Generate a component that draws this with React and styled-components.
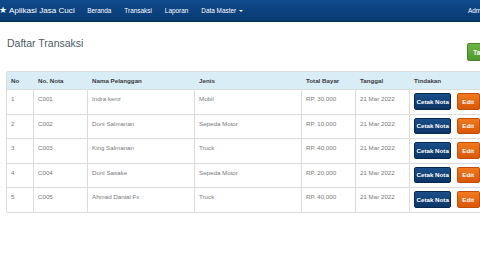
import styled, { createGlobalStyle } from "styled-components"

const GlobalStyle = createGlobalStyle`
  html, body {
    margin: 0;
    padding: 0;
    background: #fff;
    width: 480px;
    height: 270px;
    overflow: hidden;
  }
  body {
    font-family: "Liberation Sans", Arial, sans-serif;
  }
`

const Page = styled.div`
  width: 520px;
`

const NavBar = styled.div`
  height: 21px;
  width: 500px;
  display: flex;
  align-items: center;
  background: linear-gradient(#0e4a8c, #0a3b72);
  border-bottom: 1px solid #062c57;
  color: #fff;
`

const Brand = styled.div`
  display: flex;
  align-items: center;
  gap: 2px;
  font-size: 8.1px;
  font-weight: 500;
  margin-right: 6px;
`

const Star = styled.span`
  font-size: 9px;
  line-height: 1;
  margin-left: -1px;
`

const NavLink = styled.div`
  font-size: 6.4px;
  padding: 0 6.5px;
  display: flex;
  align-items: center;
  gap: 3px;
  margin-left: ${p => (p.$right ? "auto" : "0")};
  padding-right: ${p => (p.$right ? "7px" : "6.5px")};
`

const Caret = styled.span`
  width: 0;
  height: 0;
  border-left: 2.5px solid transparent;
  border-right: 2.5px solid transparent;
  border-top: 2.5px solid #fff;
`

const Content = styled.div`
  padding: 14px 0 0 6px;
`

const TitleRow = styled.div`
  width: 497px;
  display: flex;
  justify-content: space-between;
  align-items: flex-start;
  height: 25px;
  margin-bottom: 10px;
`

const Title = styled.h1`
  margin: 0 0 0 1px;
  font-size: 10.5px;
  line-height: 14px;
  font-weight: normal;
  color: #4d5b69;
`

const AddButton = styled.button`
  margin-top: 7px;
  height: 18px;
  padding: 0 5px;
  font-family: inherit;
  font-size: 6.3px;
  font-weight: bold;
  color: #fff;
  background: linear-gradient(#6bb444, #519a2c);
  border: 1px solid #46862a;
  border-radius: 2px;
`

const Table = styled.table`
  width: 480px;
  table-layout: fixed;
  border-collapse: separate;
  border-spacing: 0;
  border: 1px solid #dcdcdc;
  border-radius: 2px;
  font-size: 6.2px;
`

const Th = styled.th`
  background: #d9edf7;
  color: #3a3a3a;
  font-weight: bold;
  text-align: left;
  height: 17px;
  padding: 0 4px;
  border-left: ${p => (p.$first ? "none" : "1px solid #d9edf7")};
`

const Td = styled.td`
  color: #7a7a7a;
  vertical-align: top;
  height: 15.5px;
  padding: 5px 4px 3px;
  border-top: 1px solid #dcdcdc;
  border-left: ${p => (p.$first ? "none" : "1px solid #dcdcdc")};
  line-height: 8px;
`

const ActionTd = styled(Td)`
  padding: 3px 4px 3px;
  white-space: nowrap;
`

const Actions = styled.div`
  display: flex;
  gap: 5.5px;
`

const ActionButton = styled.button`
  height: 16.5px;
  padding: 0 ${p => (p.$edit ? "4.5px" : "1.5px")};
  font-family: inherit;
  font-size: 6.2px;
  font-weight: bold;
  color: #fff;
  border-radius: 2px;
  background: ${p =>
    p.$edit
      ? "linear-gradient(#f07a1e, #d9570a)"
      : "linear-gradient(#1a4f8a, #0c3566)"};
  border: 1px solid ${p => (p.$edit ? "#c44e08" : "#08294f")};
`

const rows = [
  { no: 1, nota: "C001", nama: "Indra kenz", jenis: "Mobil", total: "RP. 30,000" },
  { no: 2, nota: "C002", nama: "Doni Salmanan", jenis: "Sepeda Motor", total: "RP. 10,000" },
  { no: 3, nota: "C003", nama: "King Salmanan", jenis: "Truck", total: "RP. 40,000" },
  { no: 4, nota: "C004", nama: "Doni Sasake", jenis: "Sepeda Motor", total: "RP. 20,000" },
  { no: 5, nota: "C005", nama: "Ahmad Danial Fx", jenis: "Truck", total: "RP. 40,000" },
]

const App = () => {
  return (
    <>
      <GlobalStyle />
      <Page>
        <NavBar>
          <Brand>
            <Star>★</Star>
            <span>Aplikasi Jasa Cuci</span>
          </Brand>
          <NavLink>Beranda</NavLink>
          <NavLink>Transaksi</NavLink>
          <NavLink>Laporan</NavLink>
          <NavLink>
            Data Master <Caret />
          </NavLink>
          <NavLink $right>
            Admin <Caret />
          </NavLink>
        </NavBar>

        <Content>
          <TitleRow>
            <Title>Daftar Transaksi</Title>
            <AddButton>Tambah</AddButton>
          </TitleRow>

          <Table>
            <colgroup>
              <col style={{ width: 26 }} />
              <col style={{ width: 54 }} />
              <col style={{ width: 107 }} />
              <col style={{ width: 107 }} />
              <col style={{ width: 54 }} />
              <col style={{ width: 54 }} />
              <col />
            </colgroup>
            <thead>
              <tr>
                <Th $first>No</Th>
                <Th>No. Nota</Th>
                <Th>Nama Pelanggan</Th>
                <Th>Jenis</Th>
                <Th>Total Bayar</Th>
                <Th>Tanggal</Th>
                <Th>Tindakan</Th>
              </tr>
            </thead>
            <tbody>
              {rows.map(r => (
                <tr key={r.no}>
                  <Td $first>{r.no}</Td>
                  <Td>{r.nota}</Td>
                  <Td>{r.nama}</Td>
                  <Td>{r.jenis}</Td>
                  <Td>{r.total}</Td>
                  <Td>21 Mar 2022</Td>
                  <ActionTd>
                    <Actions>
                      <ActionButton>Cetak Nota</ActionButton>
                      <ActionButton $edit>Edit</ActionButton>
                    </Actions>
                  </ActionTd>
                </tr>
              ))}
            </tbody>
          </Table>
        </Content>
      </Page>
    </>
  )
}

export default App
